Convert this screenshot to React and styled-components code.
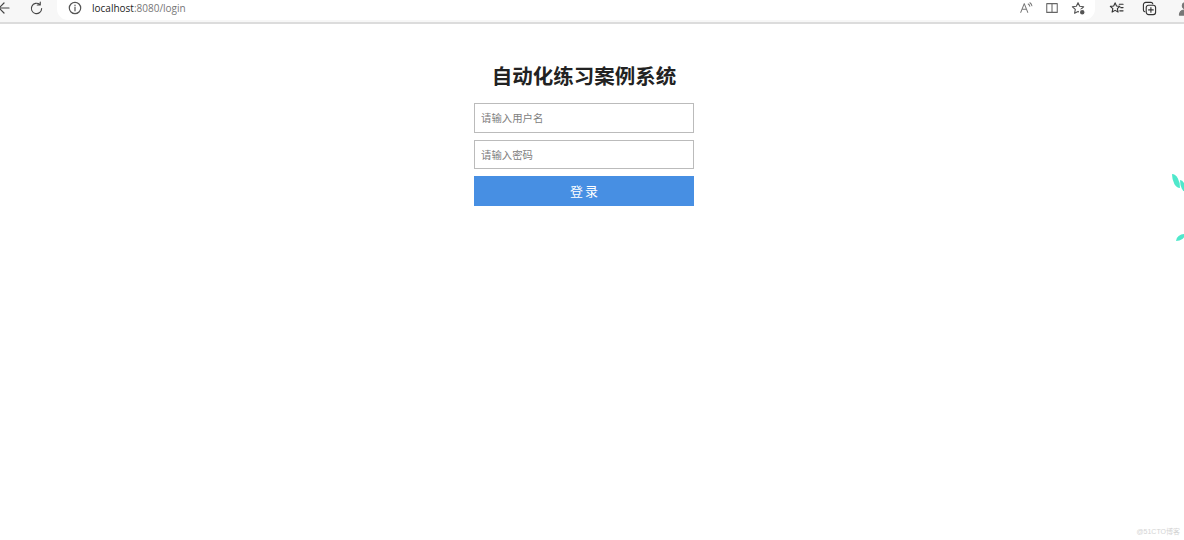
import React from "react";
import styled, { createGlobalStyle } from "styled-components";

const GlobalStyle = createGlobalStyle`
  html, body {
    margin: 0;
    padding: 0;
    background: #fff;
    font-family: "Liberation Sans", "Noto Sans CJK SC", sans-serif;
  }
`;

const Page = styled.div`
  position: relative;
  width: 1184px;
  height: 540px;
  overflow: hidden;
  background: #fff;
`;

const BrowserBar = styled.div`
  height: 22px;
  display: flex;
  align-items: flex-start;
  background: #f7f7f7;
  border-bottom: 2px solid #dcdcdc;
`;

const NavIcon = styled.svg`
  flex: none;
  width: ${props => props.size || 16}px;
  height: ${props => props.size || 16}px;
  margin-left: ${props => props.left || 0}px;
  margin-top: ${props => props.top || 0}px;
  fill: none;
  stroke: ${props => props.color || "#444"};
  stroke-width: 1.2;
  stroke-linecap: round;
  stroke-linejoin: round;
`;

const AddressPill = styled.div`
  flex: none;
  box-sizing: border-box;
  width: 1038px;
  height: 20px;
  margin-left: 13px;
  padding: 0 9px 4px 11px;
  display: flex;
  align-items: center;
  background: #fff;
  border-radius: 0 0 11px 11px;
`;

const Url = styled.div`
  margin-left: 10px;
  font-family: "Open Sans", "Noto Sans", sans-serif;
  font-size: 10px;
  color: #777;
  flex: 1;

  b {
    font-weight: 400;
    color: #1d1d1d;
  }
`;

/* the reference page is centred in 1168px, the rest is the scrollbar gutter */
const Main = styled.main`
  padding-right: 16px;
`;

const LoginBox = styled.div`
  width: 220px;
  margin: 37px auto 0;
  display: flex;
  flex-direction: column;
  align-items: center;
`;

const Title = styled.h1`
  margin: 0 -20px 14px;
  font-size: 20.5px;
  line-height: 28px;
  font-weight: 700;
  color: #222;
  white-space: nowrap;
  font-family: "Noto Sans CJK SC", sans-serif;
`;

const Field = styled.input`
  box-sizing: border-box;
  width: 220px;
  height: 29.5px;
  margin-bottom: 7px;
  padding: 0 6px;
  border: 1px solid #bbb;
  outline: none;
  background: #fff;
  font-size: 10.4px;
  font-family: "Noto Sans CJK SC", sans-serif;
  color: #333;

  &::placeholder {
    color: #808080;
    opacity: 1;
  }
`;

const LoginButton = styled.button`
  width: 220px;
  height: 29.5px;
  border: none;
  padding: 0;
  background: #478fe3;
  color: #fff;
  font-size: 13px;
  word-spacing: -1px;
  font-family: "Noto Sans CJK SC", sans-serif;
`;

const Leaf = styled.div`
  position: absolute;
  left: ${props => props.x}px;
  top: ${props => props.y}px;
  width: ${props => props.w}px;
  height: ${props => props.h}px;
  background: #4fe8cb;
  border-radius: ${props => (props.rising ? "100% 0 100% 0" : "0 100% 0 100%")};
`;

const Watermark = styled.div`
  position: absolute;
  right: 4px;
  bottom: 3px;
  font-size: 7px;
  line-height: 10px;
  color: #d4d4d4;
  font-family: "Liberation Sans", "Noto Sans CJK SC", sans-serif;
`;

const App = () => {
  return (
    <Page>
      <GlobalStyle />
      <BrowserBar>
        <NavIcon viewBox="0 0 16 16" size={16} left={-3}>
          <path d="M12 8H2M7 3 2 8l5 5" />
        </NavIcon>
        <NavIcon viewBox="0 0 16 16" size={15} left={16} top={1}>
          <path d="M13.5 8a5.5 5.5 0 1 1-2-4.3M12 1v3.2H8.8" />
        </NavIcon>
        <AddressPill>
          <NavIcon viewBox="0 0 14 14" size={14} color="#555">
            <circle cx="7" cy="7" r="5.7" />
            <path d="M7 6.2v3.6M7 4.1v.4" />
          </NavIcon>
          <Url><b>localhost</b>:8080/login</Url>
          <NavIcon viewBox="0 0 16 16" size={14} color="#777">
            <path d="M2 13 6 3l4 10M3.5 9.5h5M10.5 3.5c1 .6 1.6 1.4 1.8 2.5M12.5 2c1.2.8 2 2 2.2 3.4" />
          </NavIcon>
          <NavIcon viewBox="0 0 16 16" size={14} left={12} color="#666">
            <path d="M2 3h12v10H2zM8 3v10" />
          </NavIcon>
          <NavIcon viewBox="0 0 16 16" size={15} left={12} color="#555">
            <path d="m7.5 1.8 1.8 3.8 4.2.5-3.1 2.9.8 4.1-3.7-2-3.7 2 .8-4.1L1.5 6.1l4.2-.5z" />
            <circle cx="12" cy="12" r="3" fill="#555" stroke="#fff" />
          </NavIcon>
        </AddressPill>
        <NavIcon viewBox="0 0 16 16" size={15} left={14} top={1} color="#333">
          <path d="m6.5 2 1.5 3.3 3.6.4-2.7 2.5.8 3.6-3.2-1.8-3.2 1.8.8-3.6L1.4 5.7 5 5.3zM11 3.5h4M12.5 7h2.5M11.5 10.5H15" />
        </NavIcon>
        <NavIcon viewBox="0 0 16 16" size={15} left={18} top={1} color="#333">
          <path d="M3 11.5A2 2 0 0 1 1.5 9.5V4A2.5 2.5 0 0 1 4 1.5h5.5A2 2 0 0 1 11.5 3" />
          <rect x="4.5" y="4.5" width="10" height="10" rx="2.5" />
          <path d="M9.5 7v5M7 9.5h5" />
        </NavIcon>
        <NavIcon viewBox="0 0 16 16" size={15} left={21} top={1} color="#777">
          <circle cx="8" cy="5" r="3.4" fill="#777" />
          <path d="M1.5 15c0-4 3-5.5 6.5-5.5s6.5 1.5 6.5 5.5z" fill="#777" />
        </NavIcon>
      </BrowserBar>

      <Main>
        <LoginBox>
          <Title>自动化练习案例系统</Title>
          <Field placeholder="请输入用户名" />
          <Field placeholder="请输入密码" type="password" />
          <LoginButton>登 录</LoginButton>
        </LoginBox>
      </Main>

      <Leaf x={1172} y={174} w={8} h={14} />
      <Leaf x={1180} y={180} w={6} h={12} />
      <Leaf x={1176} y={234} w={9} h={7} rising />
      <Watermark>@51CTO博客</Watermark>
    </Page>
  );
};

export default App;
